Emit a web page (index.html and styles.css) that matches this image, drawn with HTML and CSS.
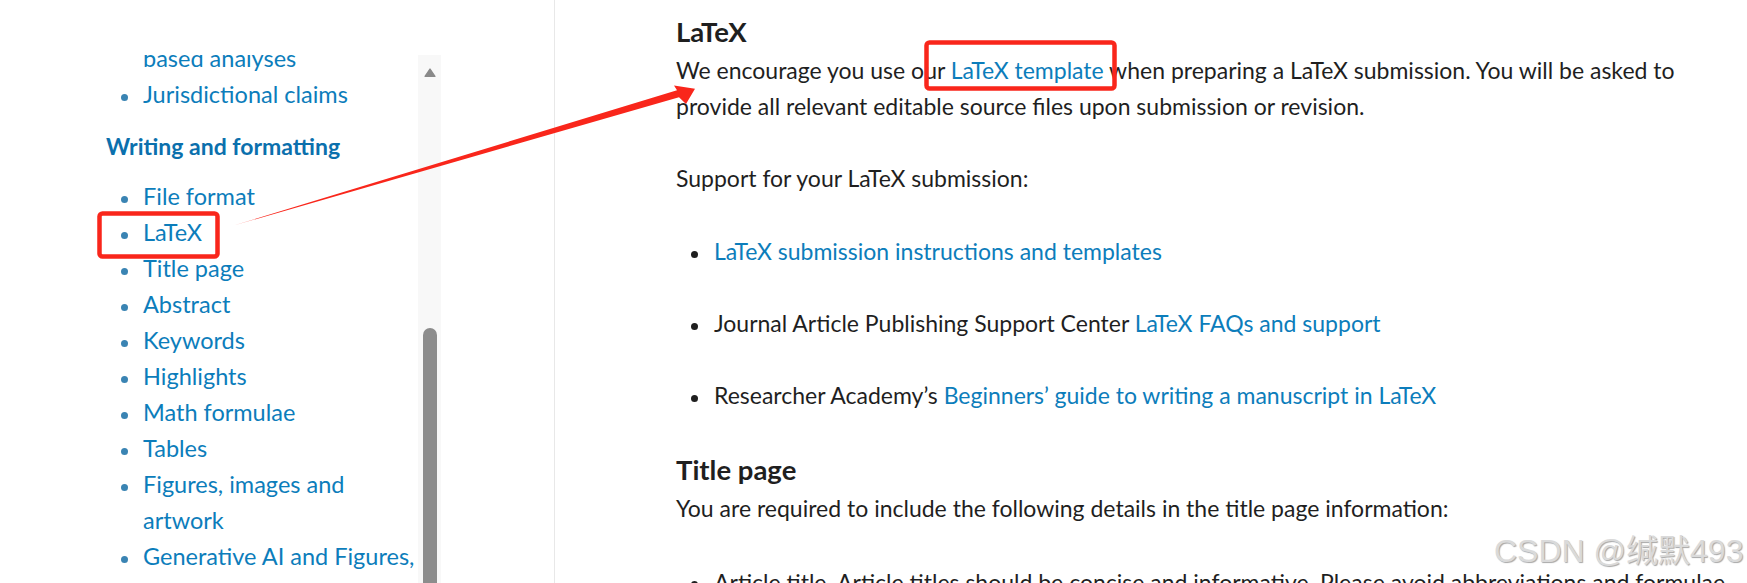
FILE: index.html
```html
<!DOCTYPE html>
<html lang="en">
<head>
<meta charset="utf-8">
<title>LaTeX - Guide for authors</title>
<link rel="stylesheet" href="styles.css">
</head>
<body>
<div class="page">
  <aside class="sidebar">
    <div class="nav-scroll">
      <nav class="nav">
        <ul class="nav-list">
          <li class="tail"><a href="#">based analyses</a></li>
          <li><a href="#">Jurisdictional claims</a></li>
        </ul>
        <h3 class="nav-heading">Writing and formatting</h3>
        <ul class="nav-list">
          <li><a href="#">File format</a></li>
          <li><a href="#">LaTeX</a></li>
          <li><a href="#">Title page</a></li>
          <li><a href="#">Abstract</a></li>
          <li><a href="#">Keywords</a></li>
          <li><a href="#">Highlights</a></li>
          <li><a href="#">Math formulae</a></li>
          <li><a href="#">Tables</a></li>
          <li><a href="#">Figures, images and artwork</a></li>
          <li><a href="#">Generative AI and Figures, images and artwork</a></li>
        </ul>
      </nav>
      <div class="scrollbar">
        <svg class="sb-arrow" width="14" height="11" viewBox="0 0 14 11"><path d="M7 1.2 L12.8 9.8 H1.2 Z" fill="#8a8a8a" stroke="#8a8a8a" stroke-width="1.6" stroke-linejoin="round"/></svg>
        <div class="sb-thumb"></div>
      </div>
    </div>
  </aside>
  <main class="content">
    <h2 class="title">LaTeX</h2>
    <p>We encourage you use our <a href="#">LaTeX template</a> when preparing a LaTeX submission. You will be asked to provide all relevant editable source files upon submission or revision.</p>
    <p>Support for your LaTeX submission:</p>
    <ul class="list">
      <li><span><a href="#">LaTeX submission instructions and templates</a></span></li>
      <li><span>Journal Article Publishing Support Center <a href="#">LaTeX FAQs and support</a></span></li>
      <li><span>Researcher Academy’s <a href="#">Beginners’ guide to writing a manuscript in LaTeX</a></span></li>
    </ul>
    <h2 class="title section">Title page</h2>
    <p>You are required to include the following details in the title page information:</p>
    <ul class="list">
      <li><span>Article title. Article titles should be concise and informative. Please avoid abbreviations and formulae where possible, except where they are commonly used in your field.</span></li>
    </ul>
  </main>
</div>
<svg class="annot" width="1747" height="583" viewBox="0 0 1747 583">
  <rect x="99.5" y="213.5" width="118" height="43" rx="3" fill="none" stroke="#f9261b" stroke-width="4.5"/>
  <rect x="926.5" y="42.5" width="188" height="46" rx="3" fill="none" stroke="#f9261b" stroke-width="4.5"/>
  <polygon points="233.5,225.6 677,90.3 674,85.5 695,88.7 686,104 679,97.2" fill="#f9261b"/>
</svg>
<div class="watermark">CSDN @缄默493</div>
</body>
</html>
```
FILE: styles.css
```css
* { box-sizing: border-box; }
html, body { margin: 0; padding: 0; background: #fff; }
body {
  width: 1747px;
  height: 583px;
  overflow: hidden;
  position: relative;
  font-family: Lato, "Noto Sans", sans-serif;
  color: #1f1f1f;
}
a { color: #0c7dbb; text-decoration: none; }

.page { display: flex; height: 583px; }

/* Sidebar */
.sidebar { width: 554px; flex: none; padding-top: 55px; }
.nav-scroll { display: flex; width: 441px; height: 528px; overflow: hidden; }
.nav { flex: 1; padding-left: 106px; margin-top: -15px; }
.nav-list { list-style: none; margin: 0; padding: 0 0 0 15px; }
.nav-list li {
  display: flex;
  font-size: 23.5px;
  line-height: 36px;
}
.nav-list li::before {
  content: "";
  flex: none;
  width: 7px;
  height: 7px;
  margin: 17.5px 15px 0 0;
  border-radius: 50%;
  background: #3a84b3;
}
.nav-list li.tail::before { background: transparent; }
.nav-heading {
  margin: 16px 0 14px;
  font-size: 23px;
  line-height: 36px;
  font-weight: 700;
  color: #0b70ad;
}
.scrollbar {
  flex: none;
  width: 23px;
  background: #f8f8f8;
  display: flex;
  flex-direction: column;
  align-items: center;
  padding-top: 13px;
}
.sb-arrow { display: block; }
.sb-thumb {
  margin-top: 251px;
  width: 14px;
  height: 300px;
  border-radius: 7px 7px 0 0;
  background: #8c8c8c;
}

/* Content */
.content {
  flex: 1;
  border-left: 1px solid #e8e8e8;
  padding: 15px 7px 0 121px;
  font-size: 23px;
}
.title {
  margin: 0 0 3px;
  font-size: 27.5px;
  line-height: 34px;
  font-weight: 700;
  color: #1f1f1f;
}
.title.section { margin-top: 40px; }
.content p { margin: 0 0 35.5px; line-height: 36px; }
.list { list-style: none; margin: 37.5px 0 0; padding: 0 0 0 15px; }
.list li { display: flex; line-height: 36px; margin-bottom: 36px; }
.list li::before {
  content: "";
  flex: none;
  width: 7px;
  height: 7px;
  margin: 17.5px 16px 0 0;
  border-radius: 50%;
  background: #1f1f1f;
}

/* Overlays */
.annot { position: absolute; left: 0; top: 0; pointer-events: none; }
.watermark {
  position: absolute;
  left: 1494px;
  top: 533px;
  font-family: "Liberation Sans", "Noto Sans CJK SC", sans-serif;
  font-size: 32px;
  line-height: 36px;
  color: #dadada;
  text-shadow: 1px 1px 1px rgba(0,0,0,0.35);
  white-space: nowrap;
}
```
